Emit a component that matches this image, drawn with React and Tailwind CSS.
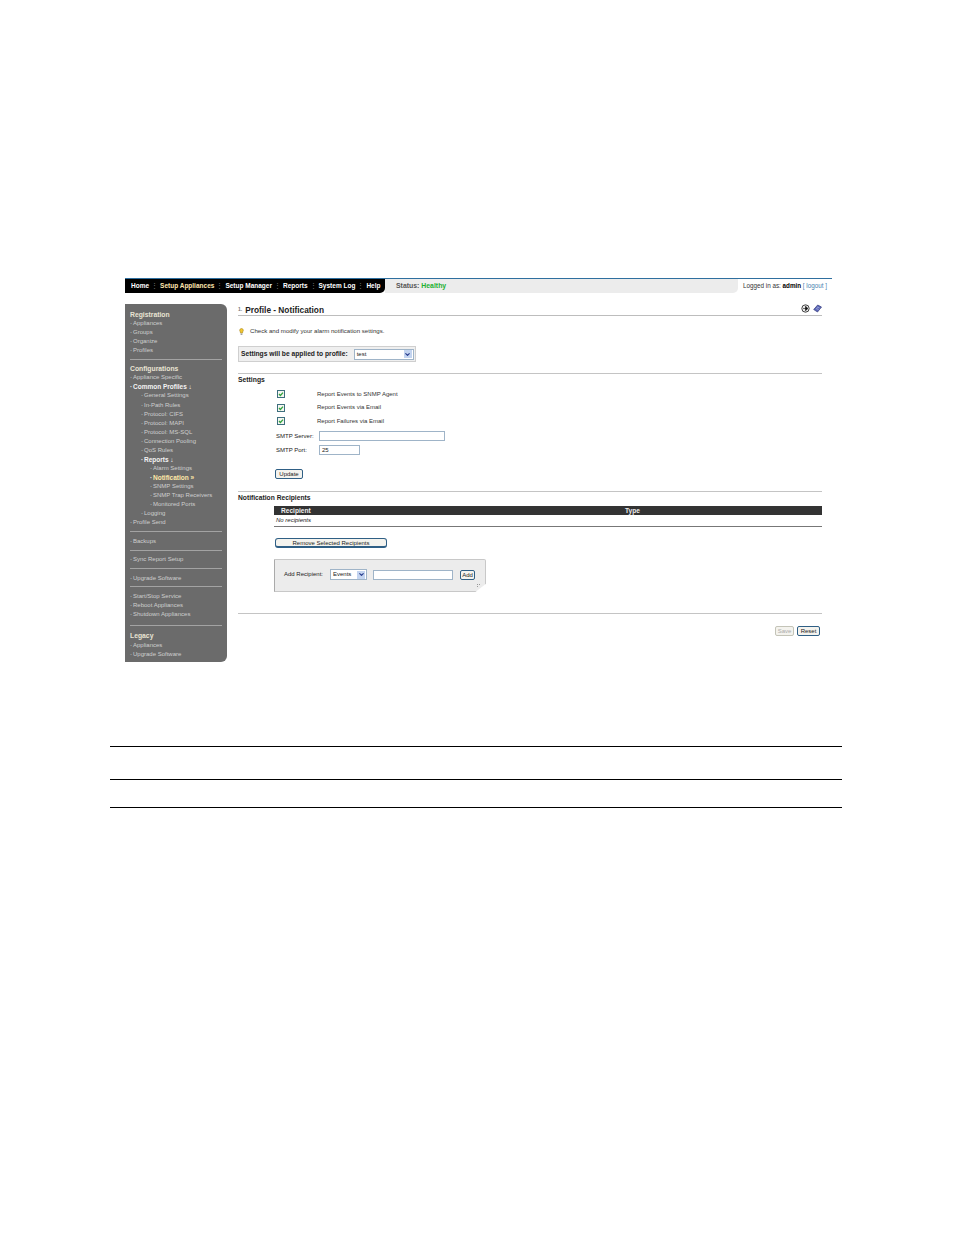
import React from 'react';
import { ChevronDown } from 'lucide-react';

const navItems = ['Home', 'Setup Appliances', 'Setup Manager', 'Reports', 'System Log', 'Help'];

const SideLink = ({ children, level = 0, bold, active, className = '' }) => (
    <div
        className={`h-[9px] leading-[9px] whitespace-nowrap ${level === 0 ? 'pl-[5px]' : level === 1 ? 'pl-[16px]' : 'pl-[25px]'} ${bold ? 'font-bold text-[6.5px] text-[#f4f4f4]' : 'text-[#cfcfcf]'} ${active ? 'text-[#ffe9a8]' : ''} ${className}`}
    >
        <span className="text-[#e8e8e8] inline-block w-[3px]">·</span>{children}
    </div>
);

const SideHead = ({ children, className = '' }) => (
    <div className={`h-[9px] leading-[9px] pl-[5px] font-bold text-[6.8px] text-[#e9e4d4] whitespace-nowrap ${className}`}>{children}</div>
);

const SideRule = ({ className }) => <div className={`mx-[5px] h-px bg-[#a3a3a3] ${className}`} />;

const Sidebar = () => (
    <aside className="w-[102px] h-[358px] bg-[#6b6b6b] rounded-tr-[6px] rounded-br-[6px] pt-[6px] text-[6px] font-['Liberation_Sans',sans-serif]">
        <SideHead>Registration</SideHead>
        <SideLink>Appliances</SideLink>
        <SideLink>Groups</SideLink>
        <SideLink>Organize</SideLink>
        <SideLink>Profiles</SideLink>
        <SideRule className="mt-[4px] mb-[4px]" />
        <SideHead>Configurations</SideHead>
        <SideLink>Appliance Specific</SideLink>
        <SideLink bold>Common Profiles ↓</SideLink>
        <SideLink level={1} className="mb-px">General Settings</SideLink>
        <SideLink level={1}>In-Path Rules</SideLink>
        <SideLink level={1}>Protocol: CIFS</SideLink>
        <SideLink level={1}>Protocol: MAPI</SideLink>
        <SideLink level={1}>Protocol: MS-SQL</SideLink>
        <SideLink level={1}>Connection Pooling</SideLink>
        <SideLink level={1}>QoS Rules</SideLink>
        <SideLink level={1} bold>Reports ↓</SideLink>
        <SideLink level={2}>Alarm Settings</SideLink>
        <SideLink level={2} bold active>Notification »</SideLink>
        <SideLink level={2}>SNMP Settings</SideLink>
        <SideLink level={2}>SNMP Trap Receivers</SideLink>
        <SideLink level={2}>Monitored Ports</SideLink>
        <SideLink level={1}>Logging</SideLink>
        <SideLink>Profile Send</SideLink>
        <SideRule className="mt-[4px] mb-[5px]" />
        <SideLink>Backups</SideLink>
        <SideRule className="mt-[4px] mb-[4px]" />
        <SideLink>Sync Report Setup</SideLink>
        <SideRule className="mt-[4px] mb-[5px]" />
        <SideLink>Upgrade Software</SideLink>
        <SideRule className="mt-[3px] mb-[5px]" />
        <SideLink>Start/Stop Service</SideLink>
        <SideLink>Reboot Appliances</SideLink>
        <SideLink>Shutdown Appliances</SideLink>
        <SideRule className="mt-[6px] mb-[5px]" />
        <SideHead className="mb-px">Legacy</SideHead>
        <SideLink>Appliances</SideLink>
        <SideLink>Upgrade Software</SideLink>
    </aside>
);

const CheckRow = ({ label }) => (
    <div className="h-[13.5px] flex items-center pl-[39px]">
        <span className="w-[8px] h-[8px] border border-[#3d6f7d] bg-[#f6f6f2] flex items-center justify-center">
            <svg width="6" height="6" viewBox="0 0 6 6">
                <path d="M1 3l1.4 1.5L5 1.6" fill="none" stroke="#2fa33c" strokeWidth="1.3" />
            </svg>
        </span>
        <span className="ml-[32px] text-[#333]">{label}</span>
    </div>
);

const Btn = ({ children, className }) => (
    <div className={`h-[10px] leading-[8px] text-center border border-[#2f5f85] rounded-[2px] bg-[#f4f3ee] text-[#222] ${className}`}>{children}</div>
);

const FakeSelect = ({ value, className }) => (
    <div className={`h-[11px] border border-[#9fb4c8] bg-white flex items-center justify-between pl-[2px] pr-px ${className}`}>
        <span className="text-[#222]">{value}</span>
        <span className="w-[8px] h-[8px] bg-[#c3d4f0] flex items-center justify-center">
            <ChevronDown size={7} strokeWidth={4} className="text-[#2a3f8f]" />
        </span>
    </div>
);

export default function App() {
    return (
        <div className="w-[954px] h-[1235px] bg-white pt-[278px] font-['Liberation_Sans',sans-serif] text-[6px] text-[#222]">
            <div className="ml-[125px] w-[707px]">
                <div className="h-px bg-[#2f6f9f]" />
                <div className="flex h-[14px]">
                    <nav className="w-[260px] bg-black rounded-br-[5px] flex items-center pl-[6px] text-white font-bold text-[6.5px] whitespace-nowrap">
                        {navItems.map((item, i) => (
                            <React.Fragment key={item}>
                                {i > 0 && <span className="text-[#777] w-[11px] text-center font-normal">⋮</span>}
                                <span className={item === 'Setup Appliances' ? 'text-[#ffe6b0]' : ''}>{item}</span>
                            </React.Fragment>
                        ))}
                    </nav>
                    <div className="w-[353px] bg-[#ececec] rounded-br-[5px] flex items-center pl-[11px] text-[6.9px] font-bold text-[#555]">
                        Status:&nbsp;<span className="text-[#22b030]">Healthy</span>
                    </div>
                    <div className="flex-1 flex items-center justify-end pr-[5px] text-[6.3px] text-[#333] whitespace-nowrap">
                        Logged in as:&nbsp;<b className="text-black">admin</b>&nbsp;<span className="text-[#4a7fb0]">[ logout ]</span>
                    </div>
                </div>

                <div className="flex mt-[11px]">
                    <Sidebar />
                    <main className="ml-[11px] w-[584px]">
                        <div className="h-[11px] flex items-center justify-between border-b border-[#bdbdbd] box-content">
                            <div className="text-[8.3px] pt-[1px] text-[#222] font-bold flex items-center">
                                <span className="text-[#777] text-[5px] mr-[3px]">1.</span>Profile - Notification
                            </div>
                            <div className="flex items-center gap-[3px] mb-[2px]">
                                <svg width="9" height="9" viewBox="0 0 9 9">
                                    <circle cx="4.5" cy="4.5" r="3.7" fill="#e8e8e8" stroke="#333" strokeWidth="0.9" />
                                    <path d="M4.5 2.2l2.4 2.3-2.4 2.2zM2 4.5h3" fill="#111" stroke="#111" strokeWidth="0.6" />
                                </svg>
                                <svg width="9" height="9" viewBox="0 0 9 9">
                                    <path d="M.7 5.5L4.7 1l3.8 2-4 5z" fill="#5a66b8" stroke="#33397a" strokeWidth="0.7" />
                                    <path d="M3 4.5l2.5 1M4 3l2.5 1" stroke="#d7dbf2" strokeWidth="0.5" />
                                </svg>
                            </div>
                        </div>

                        <div className="flex items-center h-[10px] mt-[10px] text-[6.1px] text-[#333]">
                            <svg width="5" height="7" viewBox="0 0 5 7" className="ml-px">
                                <path d="M2.5.5a1.9 1.9 0 0 1 1.1 3.4V5H1.4V3.9A1.9 1.9 0 0 1 2.5.5z" fill="#f2c62f" stroke="#9a7a12" strokeWidth="0.5" />
                                <path d="M1.6 6.2h1.8" stroke="#555" strokeWidth="0.8" />
                            </svg>
                            <span className="ml-[6px]">Check and modify your alarm notification settings.</span>
                        </div>

                        <div className="mt-[10px] w-[178px] h-[16px] bg-[#efefef] border border-[#cfcfcf] flex items-center pl-[2px]">
                            <b className="text-[6.7px] text-[#222] whitespace-nowrap">Settings will be applied to profile:</b>
                            <FakeSelect value="test" className="ml-[6px] w-[60px]" />
                        </div>

                        <div className="mt-[11px] h-px bg-[#c4c4c4]" />
                        <b className="block mt-px h-[9px] leading-[9px] text-[6.8px] text-[#222]">Settings</b>
                        <div className="mt-[3.5px]">
                            <CheckRow label="Report Events to SNMP Agent" />
                            <CheckRow label="Report Events via Email" />
                            <CheckRow label="Report Failures via Email" />
                        </div>
                        <div className="flex items-center mt-[3px] h-[10px] pl-[38px]">
                            <span className="w-[43px]">SMTP Server:</span>
                            <div className="w-[126px] h-[10px] border border-[#9fb4c8] bg-white" />
                        </div>
                        <div className="flex items-center mt-[4px] h-[10px] pl-[38px]">
                            <span className="w-[43px]">SMTP Port:</span>
                            <div className="w-[41px] h-[10px] border border-[#9fb4c8] bg-white pl-[2px] leading-[8px]">25</div>
                        </div>
                        <Btn className="mt-[14px] ml-[37px] w-[28px]">Update</Btn>

                        <div className="mt-[12px] h-px bg-[#c4c4c4]" />
                        <b className="block mt-px h-[9px] leading-[9px] text-[6.7px] text-[#222] whitespace-nowrap">Notification Recipients</b>
                        <div className="ml-[36px] mt-[4px]">
                            <div className="h-[9px] bg-[#333] text-[#eee] font-bold text-[6.6px] leading-[9px] flex pl-[7px]">
                                <span className="w-[344px]">Recipient</span>
                                <span>Type</span>
                            </div>
                            <div className="h-[12px] border-b border-[#777] italic leading-[11px] pl-[2px]">No recipients</div>
                            <Btn className="mt-[11px] ml-px w-[112px] rounded-[3px] border-b-2">Remove Selected Recipients</Btn>
                            <div className="relative mt-[11px] w-[212px] h-[33px] bg-[#ececec] border border-[#c8c8c8] border-l-[#aaa] rounded-tr-[2px] flex items-center pl-[9px] pb-[2px] [clip-path:polygon(0_0,100%_0,100%_75%,95%_100%,0_100%)]">
                                <span className="w-[46px]">Add Recipient:</span>
                                <FakeSelect value="Events" className="w-[37px] h-[10px]" />
                                <div className="ml-[6px] w-[80px] h-[10px] border border-[#9fb4c8] bg-white" />
                                <Btn className="ml-[7px] w-[15px]">Add</Btn>
                                <span className="absolute right-[5px] bottom-[4px] w-[3px] h-[3px] border-l border-t border-dotted border-[#999]" />
                            </div>
                        </div>

                        <div className="mt-[21px] h-px bg-[#c4c4c4]" />
                        <div className="flex justify-end gap-[3px] mt-[12px] pr-[2px]">
                            <Btn className="w-[19px] border-[#c4c4b8] text-[#aaa]">Save</Btn>
                            <Btn className="w-[23px]">Reset</Btn>
                        </div>
                    </main>
                </div>
            </div>

            <div className="ml-[110px] w-[732px] mt-[84px] h-px bg-black" />
            <div className="ml-[110px] w-[732px] mt-[32px] h-px bg-black" />
            <div className="ml-[110px] w-[732px] mt-[27px] h-px bg-black" />
        </div>
    );
}
